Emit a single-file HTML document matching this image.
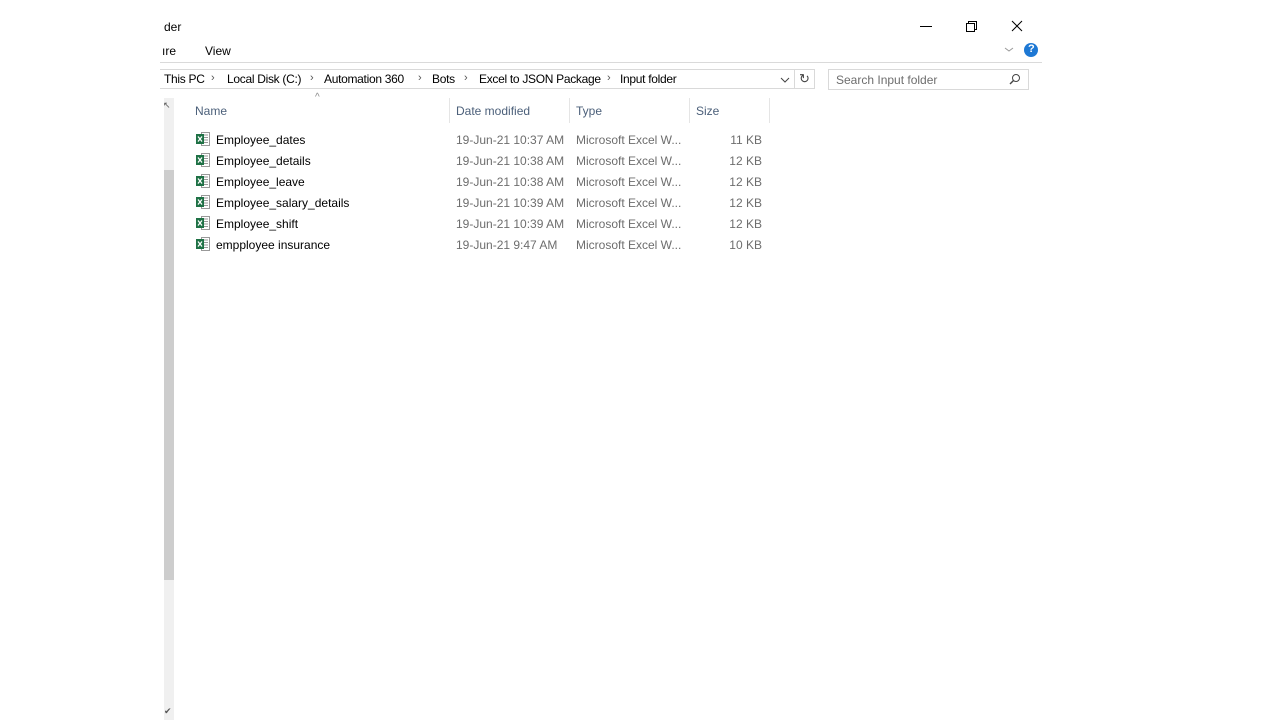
<!DOCTYPE html><html><head><style>
body{margin:0;width:1280px;height:720px;background:#fff;position:relative;overflow:hidden;font-family:"Liberation Sans",sans-serif;font-size:12px;color:#000}
.a{position:absolute;white-space:nowrap}
.row{position:absolute;left:194px;height:21px;width:576px}
.row span{position:absolute;top:4px;white-space:nowrap}
.ic{position:absolute;left:2px;top:3px;width:14px;height:14px}
.g{color:#6d6d6d}
.bc{position:absolute;top:72px;white-space:nowrap;letter-spacing:-0.3px}
.ch{position:absolute;top:72px;color:#555;font-size:11px}
</style></head><body>
<div class="a" style="left:164px;top:20px;font-size:12px">der</div>
<div class="a" style="left:162px;top:44px">ıre</div>
<div class="a" style="left:205px;top:44px">View</div>
<svg class="a" style="left:919px;top:18px" width="125" height="42">
<line x1="1" y1="8.5" x2="13" y2="8.5" stroke="#000"/>
<rect x="47.5" y="5.5" width="8" height="8" fill="none" stroke="#000"/><path d="M49.5 5.5V3.5h8v8h-2" fill="none" stroke="#000"/>
<path d="M93 3l10 10M103 3l-10 10" stroke="#000"/>
<path d="M86 30l4 3 4-3" fill="none" stroke="#999"/>
<circle cx="112" cy="32" r="7" fill="#1e78d4"/></svg>
<div class="a" style="left:1028px;top:43px;color:#fff;font-weight:bold;font-size:11px">?</div>
<div class="a" style="left:160px;top:62px;width:882px;height:1px;background:#dadada"></div>
<div class="a" style="left:160px;top:69px;width:635px;height:20px;border:1px solid #d9d9d9;border-left:none;box-sizing:border-box"></div>
<div class="a" style="left:795px;top:69px;width:20px;height:20px;border:1px solid #d9d9d9;border-left:none;box-sizing:border-box;text-align:center;line-height:18px;font-size:13px;color:#444">↻</div>
<span class="bc" style="left:164px">This PC</span><span class="ch" style="left:211px">›</span>
<span class="bc" style="left:227px">Local Disk (C:)</span><span class="ch" style="left:310px">›</span>
<span class="bc" style="left:324px">Automation 360</span><span class="ch" style="left:418px">›</span>
<span class="bc" style="left:432px">Bots</span><span class="ch" style="left:464px">›</span>
<span class="bc" style="left:479px">Excel to JSON Package</span><span class="ch" style="left:607px">›</span>
<span class="bc" style="left:620px">Input folder</span>
<svg class="a" style="left:780px;top:76px" width="10" height="8"><path d="M1 2l4 4 4-4" fill="none" stroke="#444"/></svg>
<div class="a" style="left:828px;top:69px;width:201px;height:21px;border:1px solid #d9d9d9;box-sizing:border-box"></div>
<div class="a g" style="left:836px;top:73px">Search Input folder</div>
<svg class="a" style="left:1009px;top:73px" width="12" height="12"><circle cx="7" cy="5" r="3.5" fill="none" stroke="#444"/><path d="M4.5 7.5L1 11" stroke="#444" stroke-width="1.4"/></svg>
<div class="a" style="left:164px;top:98px;width:10px;height:622px;background:#f0f0f0"></div>
<div class="a" style="left:164px;top:170px;width:10px;height:410px;background:#cdcdcd"></div>
<div class="a" style="left:163px;top:100px;font-size:9px;color:#555">↖</div>
<div class="a" style="left:164px;top:706px;font-size:9px;color:#555">✔</div>
<div class="a" style="left:195px;top:104px;color:#4c607a">Name</div>
<div class="a" style="left:315px;top:92px;font-size:10px;color:#888">^</div>
<div class="a" style="left:456px;top:104px;color:#4c607a">Date modified</div>
<div class="a" style="left:576px;top:104px;color:#4c607a">Type</div>
<div class="a" style="left:696px;top:104px;color:#4c607a">Size</div>
<div class="a" style="left:449px;top:98px;width:1px;height:25px;background:#e5e5e5"></div>
<div class="a" style="left:569px;top:98px;width:1px;height:25px;background:#e5e5e5"></div>
<div class="a" style="left:689px;top:98px;width:1px;height:25px;background:#e5e5e5"></div>
<div class="a" style="left:769px;top:98px;width:1px;height:25px;background:#e5e5e5"></div>

<div id="rows"></div>
<script>
var d=[["Employee_dates","10:37 AM","11"],["Employee_details","10:38 AM","12"],["Employee_leave","10:38 AM","12"],["Employee_salary_details","10:39 AM","12"],["Employee_shift","10:39 AM","12"],["empployee insurance","9:47 AM","10"]];
var h="";d.forEach(function(r,i){h+='<div class="row" style="top:'+(129+i*21)+'px"><svg class="ic" viewBox="0 0 14 14"><rect x="5.5" y="0.5" width="8" height="13" fill="#fff" stroke="#999"/><path d="M7 3h5M7 5.5h5M7 8h5M7 10.5h5" stroke="#999"/><rect x="0" y="2" width="8" height="10" fill="#1e7145"/><path d="M2 4.5l4 5M6 4.5l-4 5" stroke="#fff" stroke-width="1.3"/></svg><span style="left:22px">'+r[0]+'</span><span class="g" style="left:262px">19-Jun-21 '+r[1]+'</span><span class="g" style="left:382px">Microsoft Excel W...</span><span class="g" style="right:8px">'+r[2]+' KB</span></div>';});
document.getElementById("rows").innerHTML=h;
</script>
</body></html>
